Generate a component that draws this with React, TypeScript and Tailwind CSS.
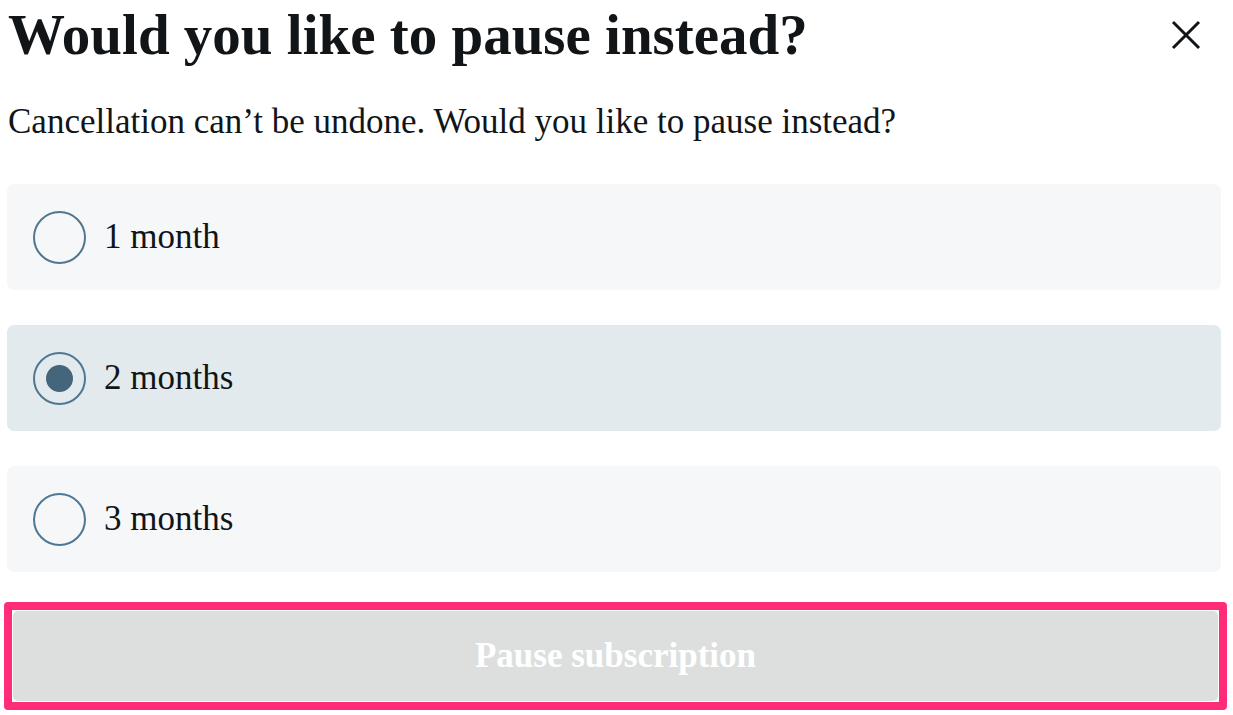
import React, { useState } from "react";

const options = ["1 month", "2 months", "3 months"];

export default function App() {
  const [selected, setSelected] = useState(1);
  return (
    <div className="w-[1233px] h-[715px] bg-white overflow-hidden text-[#111518]" style={{ fontFamily: '"Liberation Serif", "Times New Roman", serif' }}>
      <div className="px-[7px]">
        <div className="flex items-start justify-between">
          <h1 className="ml-[1px] mt-[2px] text-[57px] font-bold leading-[66px]">Would you like to pause instead?</h1>
          <button className="mt-[18px] mr-[23px] w-[34px] h-[34px] flex items-center justify-center" aria-label="Close">
            <svg width="32" height="32" viewBox="0 0 32 32" fill="none" stroke="#111518" strokeWidth="3" strokeLinecap="butt">
              <path d="M3 3 L29 29 M29 3 L3 29" />
            </svg>
          </button>
        </div>
        <p className="ml-[1px] mt-[33px] text-[35px] leading-[42px]">Cancellation can’t be undone. Would you like to pause instead?</p>
        <div className="mt-[41px] flex flex-col gap-[35px] mr-[5px]">
          {options.map((o, i) => {
            const sel = i === selected;
            return (
              <label
                key={o}
                onClick={() => setSelected(i)}
                className={`flex items-center h-[106px] rounded-[7px] pl-[26px] cursor-pointer ${sel ? "bg-[#e3eaed]" : "bg-[#f6f7f9]"}`}
              >
                <span className="w-[53px] h-[53px] rounded-full border-2 border-[#4f7791] flex items-center justify-center shrink-0">
                  {sel && <span className="w-[27px] h-[27px] rounded-full bg-[#45657b]" />}
                </span>
                <span className="ml-[18px] text-[35px] leading-[42px]">{o}</span>
              </label>
            );
          })}
        </div>
        <div className="mt-[30px] ml-[-3px] mr-[-1px] rounded-[4px] border-8 border-[#ff2d78] bg-white p-[1px]">
          <button className="block w-full h-[90px] rounded-[5px] bg-[#dddfde] text-white text-[35px] font-bold">
            Pause subscription
          </button>
        </div>
      </div>
    </div>
  );
}
